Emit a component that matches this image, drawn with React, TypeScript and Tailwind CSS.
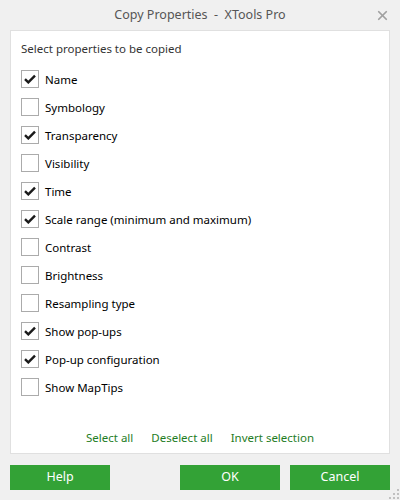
import { X } from "lucide-react";

const items: [string, boolean][] = [
  ["Name", true],
  ["Symbology", false],
  ["Transparency", true],
  ["Visibility", false],
  ["Time", true],
  ["Scale range (minimum and maximum)", true],
  ["Contrast", false],
  ["Brightness", false],
  ["Resampling type", false],
  ["Show pop-ups", true],
  ["Pop-up configuration", true],
  ["Show MapTips", false],
];

const Check = ({ on }: { on: boolean }) => (
  <span className="flex items-center justify-center w-[18px] h-[18px] border border-[#ababab] bg-white">
    {on && (
      <svg width="12" height="10" viewBox="0 0 12 10">
        <path d="M1 5.2 L4.3 8.4 L11 1.6" fill="none" stroke="#1a1a1a" strokeWidth="2.4" />
      </svg>
    )}
  </span>
);

const App = () => {
  return (
    <div className="w-[400px] h-[500px] bg-[#f0f0f0] flex flex-col relative text-[11.5px] font-['Noto_Sans',sans-serif] text-black">
      <div className="h-[30px] flex items-center justify-center text-[#555] text-[12.5px] relative">
        Copy Properties&nbsp; -&nbsp; XTools Pro
        <X size={15} strokeWidth={2.8} className="absolute right-[10px] top-[8px] text-[#a0a0a0]" />
      </div>
      <div className="mx-[10px] h-[424px] bg-white border border-[#e0e0e0] flex flex-col">
        <p className="pl-[10px] pt-[9px] text-[#333]">Select properties to be copied</p>
        <div className="flex flex-col pl-[10px] pt-[8px]">
          {items.map(([t, on]) => (
            <div key={t} className="h-[28px] flex items-center gap-[6px]">
              <Check on={on} />
              <span>{t}</span>
            </div>
          ))}
        </div>
        <div className="mt-auto mb-[7px] flex justify-center gap-[18px] text-[#1f7d1f]">
          <span>Select all</span>
          <span>Deselect all</span>
          <span>Invert selection</span>
        </div>
      </div>
      <div className="flex px-[10px] mt-[11px] text-white text-[12.5px]">
        <button className="w-[100px] h-[25px] bg-[#33a236]">Help</button>
        <button className="ml-auto w-[100px] h-[25px] bg-[#33a236]">OK</button>
        <button className="ml-[10px] w-[100px] h-[25px] bg-[#33a236]">Cancel</button>
      </div>
      <div className="absolute right-[1px] bottom-[1px] grid grid-cols-3 gap-[2px]">
        <span className="w-[2px] h-[2px]" />
        <span className="w-[2px] h-[2px]" />
        <span className="w-[2px] h-[2px] bg-[#c0c0c0]" />
        <span className="w-[2px] h-[2px]" />
        <span className="w-[2px] h-[2px] bg-[#c0c0c0]" />
        <span className="w-[2px] h-[2px] bg-[#c0c0c0]" />
        <span className="w-[2px] h-[2px] bg-[#c0c0c0]" />
        <span className="w-[2px] h-[2px] bg-[#c0c0c0]" />
        <span className="w-[2px] h-[2px] bg-[#c0c0c0]" />
      </div>
    </div>
  );
};

export default App;
